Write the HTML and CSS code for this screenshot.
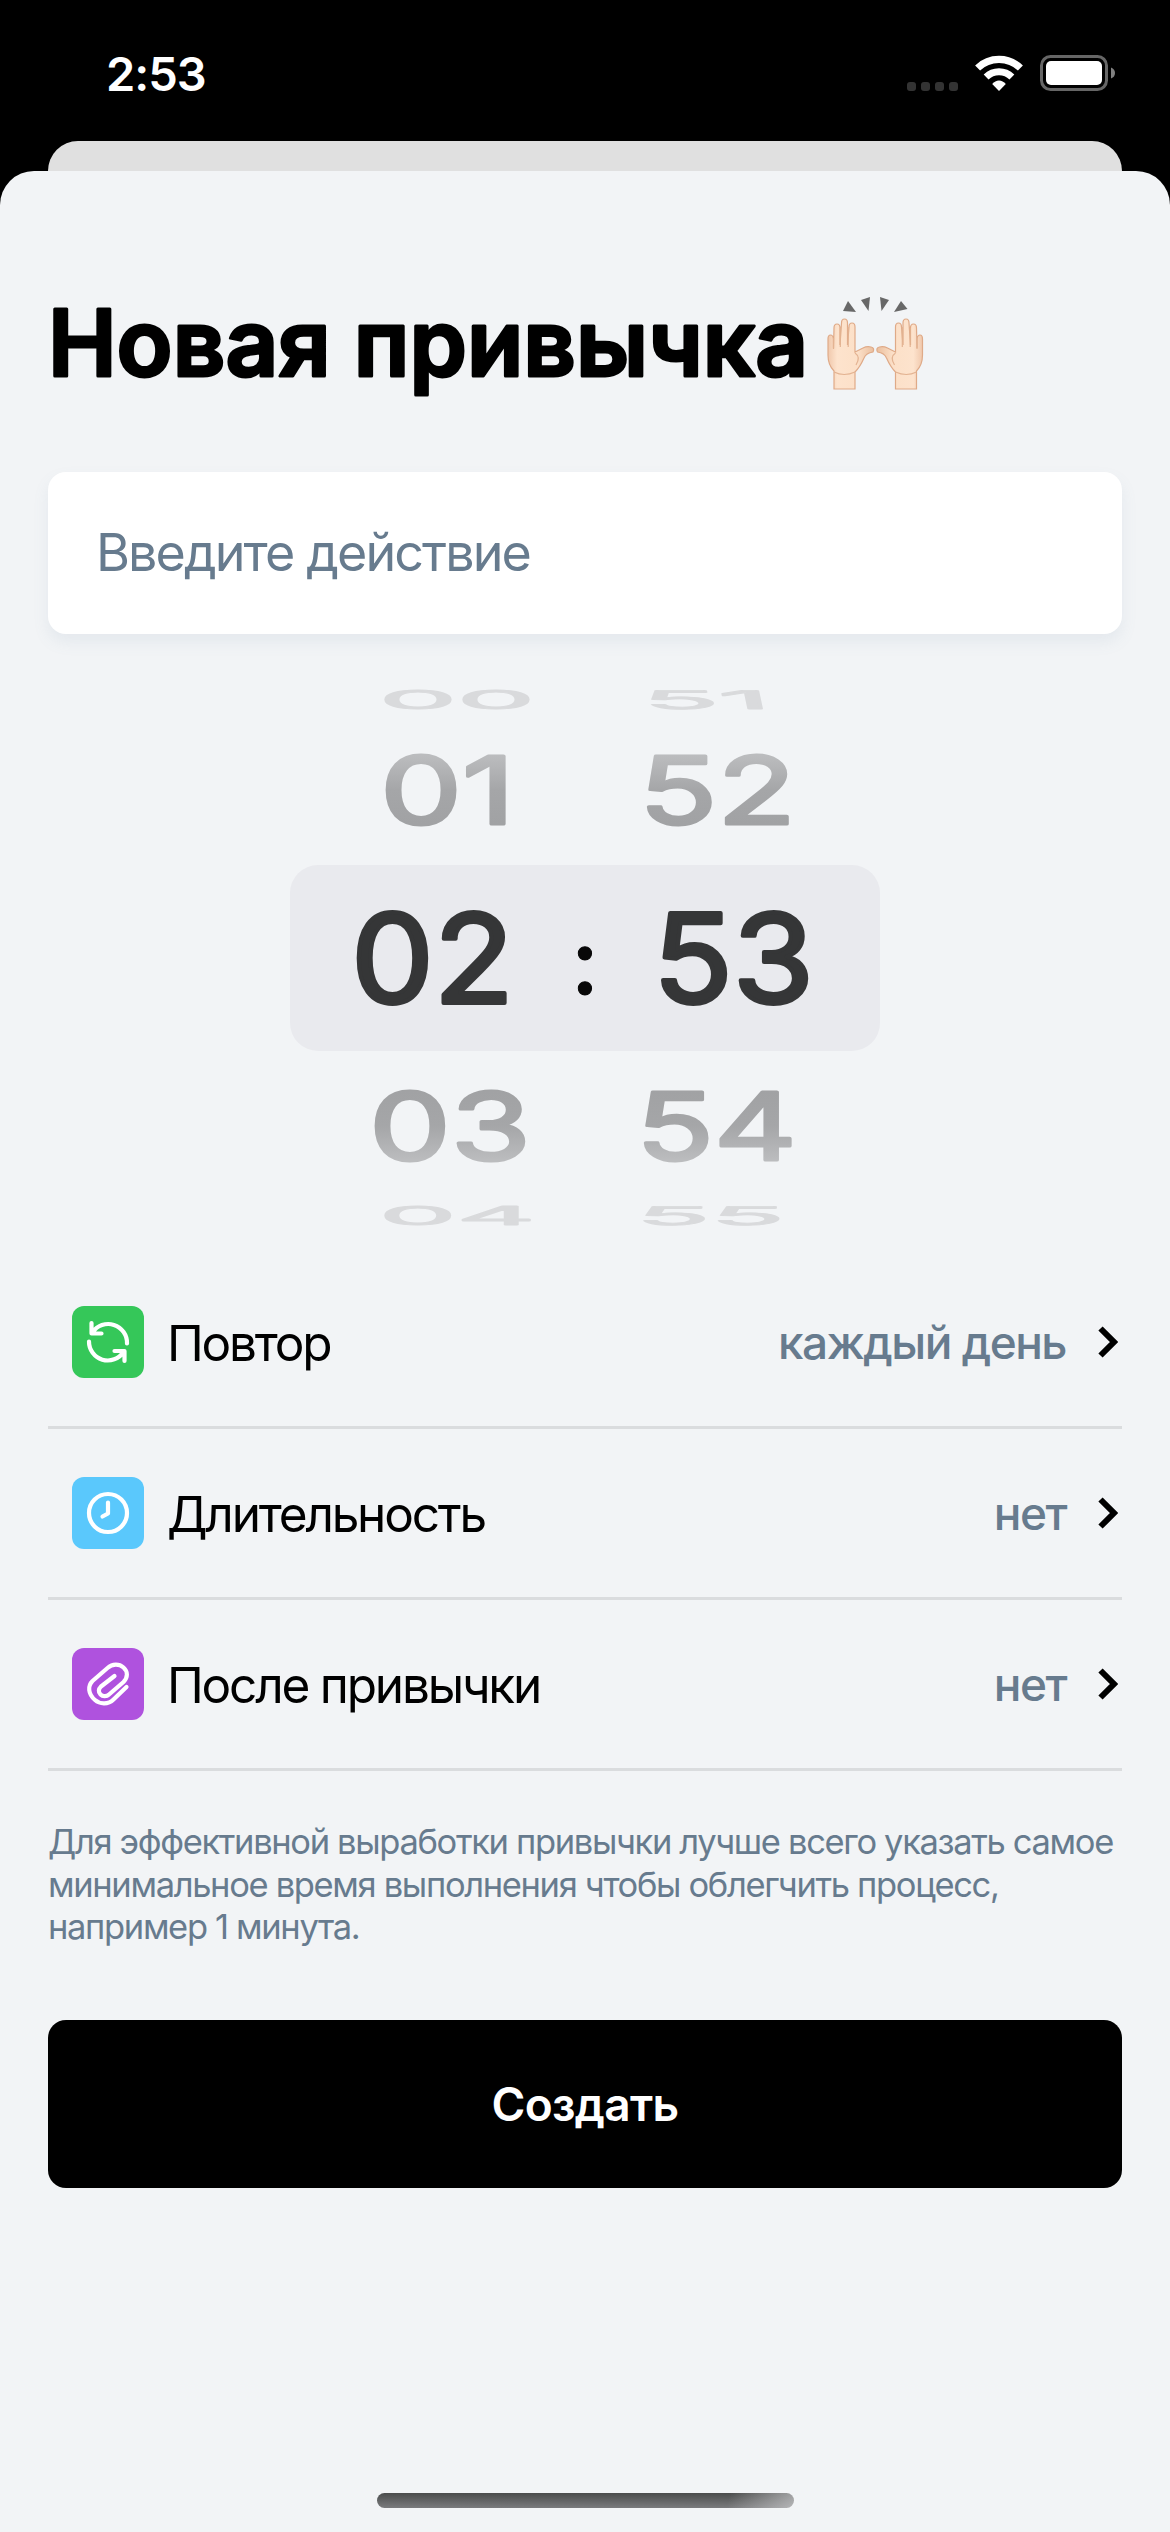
FILE: index.html
```html
<!DOCTYPE html>
<html lang="ru">
<head>
<meta charset="utf-8">
<title>Новая привычка</title>
<link rel="stylesheet" href="styles.css">
</head>
<body>
<div class="screen">
  <header class="status">
    <span class="status-time">2:53</span>
    <div class="status-icons">
      <svg class="dots" width="51" height="9" viewBox="0 0 51 9"><g fill="#333"><rect width="9" height="9" rx="3"/><rect x="14" width="9" height="9" rx="3"/><rect x="28" width="9" height="9" rx="3"/><rect x="42" width="9" height="9" rx="3"/></g></svg>
      <svg width="48" height="36" viewBox="0 0 48 36" fill="none" stroke="#fff"><path d="M2.6 13A31 31 0 0 1 45.4 13" stroke-width="7.2"/><path d="M11.1 22A18.600 18.600 0 0 1 36.900 22" stroke-width="7"/><path d="M24 36L17.200 29Q20.200 25.500 24 25.500T30.800 29Z" fill="#fff" stroke="none"/></svg>
      <svg width="76" height="36" viewBox="0 0 76 36"><rect x="1.500" y="1.500" width="65" height="33" rx="9" fill="none" stroke="#666" stroke-width="3"/><rect x="6" y="6" width="56" height="24" rx="5" fill="#fff"/><path d="M71 12.500Q75 14 75 18T71 23.500Z" fill="#808080"/></svg>
    </div>
  </header>
  <div class="sheet-behind"></div>
  <main class="sheet">
    <h1 class="title">
      <svg class="title-text" width="770" height="120" viewBox="0 0 770 120"><text x="0" y="87.500" textLength="760" lengthAdjust="spacingAndGlyphs">Новая привычка</text></svg>
      <svg class="hands" width="97" height="94" viewBox="0 0 97 94">
        <defs>
          <linearGradient id="skin" x1="0" x2="1"><stop offset="0" stop-color="#f0c8ac"/><stop offset=".2" stop-color="#fde3cd"/><stop offset=".65" stop-color="#fce0c8"/><stop offset="1" stop-color="#eabf9f"/></linearGradient>
          <g id="hand">
            <path d="M7 93V75Q1 69 1 59V43Q1 39 3.500 39T6.500 43V52L7 32Q7 28 10 28T13 32V49L14.500 27Q14.500 23 17.500 23T20.500 27V49L22 31Q22 27 25 27T28 31V56L36 52Q40 50 44 51T46 56Q39 57 37 62Q33 71 28 76V93Z" fill="url(#skin)" stroke="#dfaa88" stroke-width="1.200"/>
            <path d="M6.500 42V53M13.300 32V51M21.200 31V51M7 76Q17 81 28 76M28 57Q34 61 29 69" fill="none" stroke="#e3b392" stroke-width="1.200"/>
          </g>
        </defs>
        <g fill="#686868"><path d="M21 5L29 16L16 15Z"/><path d="M34 4L43 1L41.500 15Z"/><path d="M53 1L62 4L54.500 15Z"/><path d="M74 5L80.500 13L67 16Z"/></g>
        <use href="#hand"/><use href="#hand" transform="translate(96.500 0) scale(-1 1)"/>
      </svg>
    </h1>
    <div class="field">Введите действие</div>
    <section class="wheel">
      <div class="wheel-selection"></div>
      <svg class="wheel-values" width="640" height="560" viewBox="265 680 640 560">
        <defs>
          <linearGradient id="up" gradientUnits="userSpaceOnUse" x1="0" y1="-90" x2="0" y2="0"><stop offset="0" stop-color="#bbbcbe"/><stop offset=".5" stop-color="#a5a6a8"/><stop offset="1" stop-color="#a1a2a4"/></linearGradient>
          <linearGradient id="down" gradientUnits="userSpaceOnUse" x1="0" y1="-90" x2="0" y2="0"><stop offset="0" stop-color="#a1a2a4"/><stop offset=".5" stop-color="#a5a6a8"/><stop offset="1" stop-color="#bbbcbe"/></linearGradient>
        </defs>
        <g class="far">
          <text transform="translate(379 709) scale(1 .206)" textLength="156" lengthAdjust="spacingAndGlyphs">00</text>
          <text transform="translate(644 709) skewX(12) scale(1 .206)" textLength="128" lengthAdjust="spacingAndGlyphs">51</text>
          <text transform="translate(379 1225) scale(1 .206)" textLength="157" lengthAdjust="spacingAndGlyphs">04</text>
          <text transform="translate(635 1225) skewX(-8) scale(1 .206)" textLength="149" lengthAdjust="spacingAndGlyphs">55</text>
        </g>
        <g class="near">
          <text fill="url(#up)" stroke="url(#up)" transform="translate(380 824) scale(1 .755)" textLength="135" lengthAdjust="spacingAndGlyphs">01</text>
          <text fill="url(#up)" stroke="url(#up)" transform="translate(639 824) scale(1 .755)" textLength="157" lengthAdjust="spacingAndGlyphs">52</text>
          <text fill="url(#down)" stroke="url(#down)" transform="translate(369 1160) scale(1 .755)" textLength="162" lengthAdjust="spacingAndGlyphs">03</text>
          <text fill="url(#down)" stroke="url(#down)" transform="translate(636 1160) scale(1 .755)" textLength="161" lengthAdjust="spacingAndGlyphs">54</text>
        </g>
        <g class="current">
          <text x="351" y="1003" textLength="163" lengthAdjust="spacingAndGlyphs">02</text>
          <text x="653" y="1003" textLength="161" lengthAdjust="spacingAndGlyphs">53</text>
          <text class="colon" x="585" y="994" text-anchor="middle">:</text>
        </g>
      </svg>
    </section>
    <ul class="options">
      <li class="option">
        <span class="badge green"><svg width="42" height="42" viewBox="0 0 42 42"><path d="M4.500 2V12.500H14.500M5.500 11.500A18.800 18.800 0 0 1 40 22.500M37.500 40V30H27.500M36.500 31A18.800 18.800 0 0 1 2 20.500"/></svg></span>
        <span class="label">Повтор</span><span class="value">каждый день</span>
        <svg class="chevron" width="20" height="32" viewBox="0 0 20 32"><path d="M2.500 2.500L16 16L2.500 29.500"/></svg>
      </li>
      <li class="option">
        <span class="badge blue"><svg width="42" height="42" viewBox="0 0 42 42"><circle cx="21" cy="21" r="19"/><path d="M21 10.500V21.500L15.500 24.500"/></svg></span>
        <span class="label">Длительность</span><span class="value">нет</span>
        <svg class="chevron" width="20" height="32" viewBox="0 0 20 32"><path d="M2.500 2.500L16 16L2.500 29.500"/></svg>
      </li>
      <li class="option">
        <span class="badge purple"><svg width="42" height="42" viewBox="0 0 42 42"><path d="M39.500 24L26.500 36.500C21 42 12.500 41 8 37C1 31 .500 23 5.500 18L20.500 5C25.500 .500 32 .500 36.500 4.500C41 8.500 41 14.500 36.500 19L22 31.500C19.500 34 15.500 33.500 13.500 31.500C11 29 11.500 26 14 23.500L27.500 13"/></svg></span>
        <span class="label">После привычки</span><span class="value">нет</span>
        <svg class="chevron" width="20" height="32" viewBox="0 0 20 32"><path d="M2.500 2.500L16 16L2.500 29.500"/></svg>
      </li>
    </ul>
    <p class="hint">Для эффективной выработки привычки лучше всего указать самое<br>минимальное время выполнения чтобы облегчить процесс,<br>например 1 минута.</p>
    <button class="create">Создать</button>
    <div class="home"></div>
  </main>
</div>
</body>
</html>
```
FILE: styles.css
```css
* { box-sizing: border-box; margin: 0; padding: 0; }
body { background: #000; font-family: Inter, "Liberation Sans", sans-serif; }
.screen { width: 1170px; height: 2532px; display: flex; flex-direction: column; overflow: hidden; }
.status { height: 141px; flex: none; display: flex; justify-content: space-between; padding: 45px 54px 0 106px; color: #fff; }
.status-time { font-size: 47px; line-height: 58px; font-weight: 600; letter-spacing: -1px; }
.status-icons { display: flex; align-items: flex-start; padding-top: 10px; gap: 17px; }
.dots { margin-top: 27px; }
.sheet-behind { height: 30px; flex: none; margin: 0 48px; border-radius: 30px 30px 0 0; background: #e0e0e0; }
.sheet { flex: 1; display: flex; flex-direction: column; padding: 0 48px; border-radius: 34px 34px 0 0; background: #f2f4f6; }
.title { display: flex; height: 120px; margin-top: 117px; align-items: flex-start; }
.title-text { overflow: visible; font-size: 92px; font-weight: 600; stroke: #000; stroke-width: 3px; stroke-linejoin: round; }
.hands { margin: 8px 0 0 9px; }
.field { height: 162px; margin-top: 64px; padding-left: 48px; line-height: 162px; border-radius: 18px; background: #fff; color: #677b8e; font-size: 52px; letter-spacing: -1.9px; box-shadow: 0 8px 16px rgba(103, 140, 170, .1); }
.wheel { display: grid; height: 560px; margin-top: 46px; place-items: center; }
.wheel > * { grid-area: 1 / 1; }
.wheel-selection { width: 590px; height: 186px; margin-top: -4px; border-radius: 28px; background: #e9eaee; }
.wheel-values { font-weight: 400; stroke-linejoin: round; }
.wheel-values text { font-size: 124px; stroke-width: 4px; }
.far { fill: #d9dadc; stroke: #d9dadc; }
.current { fill: #353637; stroke: #353637; }
.wheel-values .colon { font-size: 92px; fill: #080808; stroke: #080808; stroke-width: 1px; font-weight: 500; }
.options { list-style: none; margin-top: 18px; }
.option { display: flex; align-items: center; height: 171px; padding: 0 4px 0 24px; border-bottom: 3px solid #dadcde; }
.badge { display: grid; place-items: center; width: 72px; height: 72px; border-radius: 12px; margin-right: 23px; }
.badge svg { overflow: visible; fill: none; stroke: #fff; stroke-width: 4.2px; stroke-linecap: round; stroke-linejoin: round; }
.green { background: #35c759; }
.blue { background: #5ac8fc; }
.purple { background: #af52de; }
.label { padding-top: 1px; font-size: 49.5px; color: #000; letter-spacing: -2.2px; }
.value { margin-left: auto; font-size: 46px; font-weight: 500; color: #677b8e; letter-spacing: -1.5px; }
.chevron { margin-left: 32px; fill: none; stroke: #000; stroke-width: 6px; }
.hint { margin-top: 50px; font-size: 34.5px; line-height: 42.5px; color: #677b8e; letter-spacing: -1.34px; white-space: nowrap; }
.create { height: 168px; margin-top: 71px; border: 0; border-radius: 18px; background: #000; color: #fff; font: 600 46px Inter, sans-serif; letter-spacing: -0.7px; flex: none; }
.home { width: 417px; height: 15px; margin: auto auto 24px; border-radius: 8px; background: linear-gradient(100deg, transparent 84%, rgba(220, 220, 222, .6)), linear-gradient(#4b4c4c, #7a7b7d); }
```
